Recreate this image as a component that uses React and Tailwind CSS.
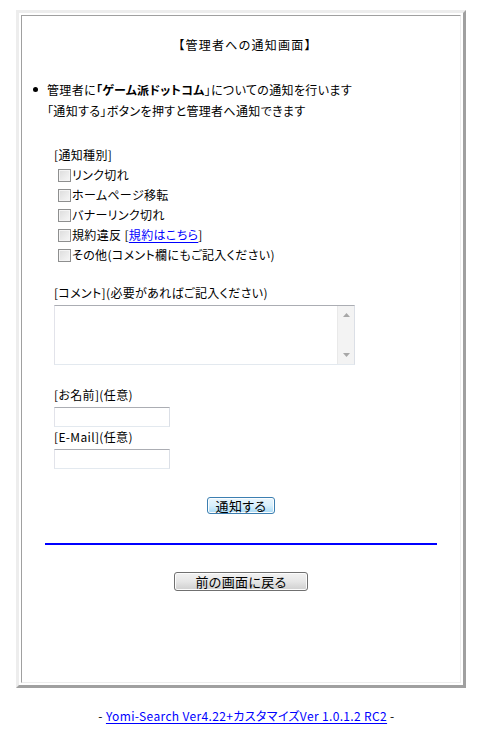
import React from "react";

const font = "font-['Noto_Sans_CJK_JP','Noto_Sans_CJK_SC',sans-serif] [font-feature-settings:'palt']";

function Check({ children }) {
  return (
    <div className="flex items-center h-[20px] leading-[20px]">
      <span className="ml-[4px] w-[13px] h-[13px] border border-[#8e8f8f] bg-gradient-to-br from-[#dcdcdc] to-[#f7f7f7] shadow-[inset_0_0_0_1px_#f4f4f4] box-border" />
      <span className="ml-[1px]">{children}</span>
    </div>
  );
}

function TextBox({ w, h, children }) {
  return (
    <div
      className={`relative box-border border border-t-[#abadb3] border-l-[#e2e3ea] border-r-[#dbdfe6] border-b-[#e3e9ef] bg-white ${w} ${h}`}
    >
      {children}
    </div>
  );
}

export default function App() {
  return (
    <div className={`${font} text-[12px] tracking-[0.35px] text-black bg-white w-[493px] h-[740px]`}>
      <div className="pt-[10px] pl-[16px]">
        <div className="w-[450px] h-[678px] box-border border-[3px] border-t-[#ededed] border-l-[#ededed] border-r-[#a0a0a0] border-b-[#a0a0a0] p-[2px]">
          <div className="h-full box-border border border-t-[#a0a0a0] border-l-[#a0a0a0] border-r-[#ededed] border-b-[#ededed] flex flex-col">
            <div className="mt-[19px] h-[20px] leading-[20px] text-center pl-[8px] [font-feature-settings:normal] tracking-[1.2px]">【管理者への通知画面】</div>

            <div className="mt-[24px] pl-[25px] relative leading-[21px]">
              <span className="absolute left-[11px] top-[8px] w-[5px] h-[5px] rounded-full bg-black" />
              <div>
                管理者に<b className="font-bold">「ゲーム派ドットコム</b>」についての通知を行います
              </div>
              <div>「通知する」ボタンを押すと管理者へ通知できます</div>
            </div>

            <div className="pl-[32px]">
              <div className="mt-[24px] h-[20px] leading-[20px]">[通知種別]</div>
              <Check>リンク切れ</Check>
              <Check>ホームページ移転</Check>
              <Check>バナーリンク切れ</Check>
              <Check>
                規約違反 [<a className="text-[#0000ff] underline underline-offset-2">規約はこちら</a>]
              </Check>
              <Check>その他(コメント欄にもご記入ください)</Check>

              <div className="mt-[18px] h-[20px] leading-[20px]">[コメント](必要があればご記入ください)</div>
              <div className="mt-[2px]">
                <TextBox w="w-[301px]" h="h-[60px]">
                  <div className="absolute right-0 top-0 bottom-0 w-[17px] bg-[#f3f3f3] border-l border-[#e9e9e9] flex flex-col items-center justify-between py-[7px]">
                    <svg width="7" height="4" viewBox="0 0 7 4">
                      <polygon points="0,4 3.5,0 7,4" fill="#a7a7a7" />
                    </svg>
                    <svg width="7" height="4" viewBox="0 0 7 4">
                      <polygon points="0,0 7,0 3.5,4" fill="#a7a7a7" />
                    </svg>
                  </div>
                </TextBox>
              </div>

              <div className="mt-[20px] h-[20px] leading-[20px]">[お名前](任意)</div>
              <div className="mt-[2px]">
                <TextBox w="w-[116px]" h="h-[20px]" />
              </div>
              <div className="h-[20px] leading-[20px]">[E-Mail](任意)</div>
              <div className="mt-[2px]">
                <TextBox w="w-[116px]" h="h-[20px]" />
              </div>
            </div>

            <div className="mt-[28px] flex justify-center">
              <div className="w-[68px] h-[17px] box-border border border-[#3c7fb1] rounded-[3px] bg-gradient-to-b from-[#eaf6fd] via-[#d9f0fc] to-[#a7d9f5] shadow-[inset_0_0_0_1px_#fcfdfe] flex items-center justify-center text-[13px] leading-none">
                通知する
              </div>
            </div>

            <div className="mt-[29px] flex justify-center">
              <div className="w-[392px] h-[2px] bg-[#0000ff]" />
            </div>

            <div className="mt-[27px] flex justify-center">
              <div className="w-[134px] h-[19px] box-border border border-[#707070] rounded-[3px] bg-gradient-to-b from-[#f2f2f2] via-[#e6e6e6] to-[#cfcfcf] shadow-[inset_0_0_0_1px_#fcfcfc] flex items-center justify-center text-[13px] leading-none">
                前の画面に戻る
              </div>
            </div>
          </div>
        </div>
      </div>

      <div className="mt-[18px] h-[20px] leading-[20px] text-center">
        - <a className="text-[#0000ff] underline underline-offset-2">Yomi-Search Ver4.22+カスタマイズVer 1.0.1.2 RC2</a> -
      </div>
    </div>
  );
}
